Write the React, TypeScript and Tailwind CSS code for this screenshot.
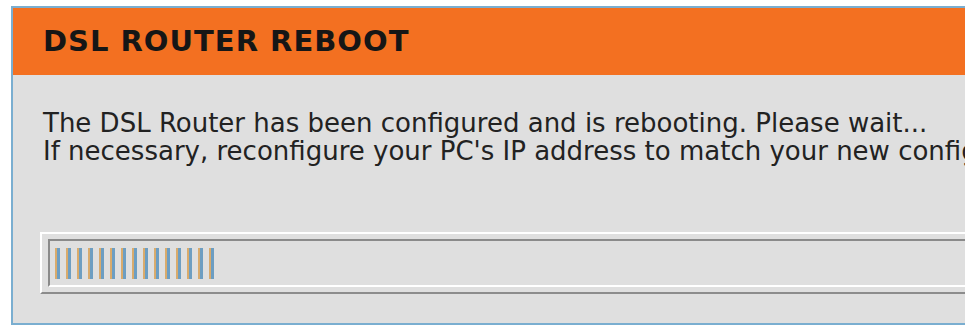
import React from "react";

const bars = Array.from({ length: 15 });

export default function App() {
  return (
    <div className="h-[328px] w-[965px] overflow-hidden bg-white pl-[11px] pt-[6px]">
      <div className="w-[1100px] border-2 border-[#7aaed0] bg-[#dfdfdf] pb-[29px]">
        {/* Header */}
        <div className="flex h-[67px] items-center bg-[#f37021] pl-[30px]">
          <h1 className="font-['DejaVu_Sans',sans-serif] text-[29px] font-bold tracking-[1px] text-[#161616]">
            DSL ROUTER REBOOT
          </h1>
        </div>

        {/* Message */}
        <div className="pl-[30px] pt-[34px] font-['DejaVu_Sans',sans-serif] text-[26px] leading-[28px] text-[#222]">
          <p className="whitespace-nowrap">The DSL Router has been configured and is rebooting. Please wait...</p>
          <p className="whitespace-nowrap">If necessary, reconfigure your PC's IP address to match your new configuration.</p>
        </div>

        {/* Progress bar */}
        <div className="ml-[27px] mt-[67px] border-t-2 border-b-2 border-l-2 border-t-white border-l-white border-b-[#8c8c8c] py-[5px] pl-[6px]">
          <div className="flex h-[48px] items-center gap-[6px] border-t-2 border-b-2 border-l-2 border-t-[#8a8a8a] border-l-[#8a8a8a] border-b-white pl-[5px]">
            {bars.map((_, i) => (
              <div key={i} className="h-[31px] w-[5px] border-l-2 border-l-[#d9ab6c] bg-[#6d9ec2]" />
            ))}
          </div>
        </div>
      </div>
    </div>
  );
}
